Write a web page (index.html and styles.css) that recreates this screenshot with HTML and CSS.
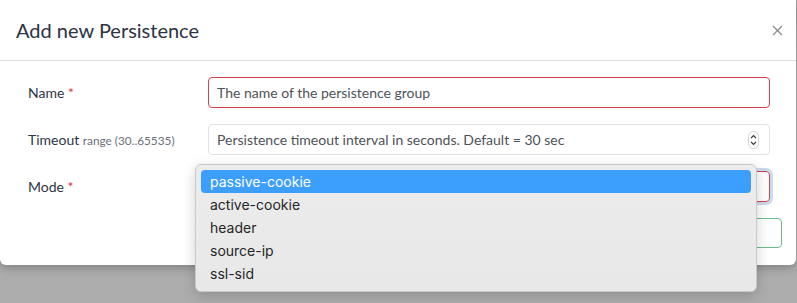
FILE: index.html
```html
<!DOCTYPE html>
<html lang="en">
<head>
  <meta charset="UTF-8">
  <meta name="viewport" content="width=device-width, initial-scale=1.0">
  <title>Add new Persistence</title>
  <link rel="stylesheet" href="styles.css">
</head>
<body>
  <div class="modal">
    <div class="modal-header">
      <h2>Add new Persistence</h2>
      <button class="close-btn" aria-label="Close">
        <svg width="11" height="11" viewBox="0 0 11 11"><path d="M1 1L10 10M10 1L1 10" stroke="#8a8a8a" stroke-width="1.3" fill="none"/></svg>
      </button>
    </div>

    <form class="modal-body">
      <div class="form-row">
        <label>Name <span class="req">*</span></label>
        <input type="text" class="field invalid" placeholder="The name of the persistence group">
      </div>
      <div class="form-row">
        <label>Timeout <small>range (30..65535)</small></label>
        <div class="number-wrap">
          <input type="text" class="field" placeholder="Persistence timeout interval in seconds. Default = 30 sec">
          <span class="spinner">
            <svg width="11" height="18" viewBox="0 0 11 18">
              <rect x="0.5" y="0.5" width="10" height="17" rx="5" fill="#fff" stroke="#d4d4d4"/>
              <path d="M3 7.2L5.5 4.6L8 7.2M3 10.8L5.5 13.4L8 10.8" stroke="#333" stroke-width="1.2" fill="none"/>
            </svg>
          </span>
        </div>
      </div>
      <div class="form-row">
        <label>Mode <span class="req">*</span></label>
        <div class="field select invalid focused"></div>
      </div>
    </form>

    <div class="modal-footer">
      <button type="button" class="save-btn">Save</button>
    </div>

    <ul class="dropdown">
      <li class="active">passive-cookie</li>
      <li>active-cookie</li>
      <li>header</li>
      <li>source-ip</li>
      <li>ssl-sid</li>
    </ul>
  </div>
</body>
</html>
```

FILE: styles.css
```css
* {
  margin: 0;
  padding: 0;
  box-sizing: border-box;
}

body {
  font-family: 'Lato', 'Open Sans', sans-serif;
  background: linear-gradient(#a2a2a2, #adadad 60px);
  height: 100vh;
  overflow: hidden;
}

.modal {
  position: relative;
  background-color: #ffffff;
  border-radius: 0 0 6px 6px;
  margin-right: 1px;
  box-shadow: 0 3px 10px rgba(0, 0, 0, 0.25);
}

.modal-header {
  display: flex;
  align-items: center;
  justify-content: space-between;
  padding: 15px 12px 15px 16px;
  border-bottom: 1px solid #dfe1e4;
}

h2 {
  font-size: 20px;
  font-weight: 400;
  line-height: 30px;
  color: #2b3345;
}

.close-btn {
  background: none;
  border: none;
  width: 11px;
  height: 11px;
  margin-right: 1px;
  display: flex;
}

.modal-body {
  display: flex;
  flex-direction: column;
  gap: 16px;
  padding: 16px 26px 0 28px;
}

.form-row {
  display: flex;
  align-items: center;
}

.form-row label {
  width: 180px;
  flex-shrink: 0;
  font-size: 14px;
  color: #2f3646;
}

.form-row label small {
  font-size: 11.8px;
  color: #6a6f78;
}

.req {
  color: #dc3545;
}

.field {
  flex: 1;
  height: 31px;
  padding: 0 8px;
  font-family: 'Lato', sans-serif;
  font-size: 14px;
  color: #333;
  border: 1px solid #dfe2e6;
  border-radius: 4px;
  outline: none;
}

.field::placeholder {
  color: #4e5258;
}

.field.invalid {
  border-color: #d9404f;
}

.field.focused {
  box-shadow: 0 0 0 3px #c9dbf0;
}

.number-wrap {
  flex: 1;
  position: relative;
  display: flex;
}

.spinner {
  position: absolute;
  right: 11px;
  top: 7px;
  display: flex;
}

.modal-footer {
  display: flex;
  justify-content: flex-end;
  padding: 16px 14px 17px;
}

.save-btn {
  height: 30px;
  width: 80px;
  background: #fff;
  border: 1px solid #6cbf8a;
  border-radius: 4px;
  color: #3a9b5c;
  font-family: 'Lato', sans-serif;
  font-size: 14px;
}

.dropdown {
  position: absolute;
  left: 195px;
  top: 164px;
  width: 562px;
  list-style: none;
  padding: 5px 5px 6px;
  background: linear-gradient(#ececec, #e8e8e8);
  border: 1px solid #c9c9c9;
  border-radius: 6px;
  box-shadow: 0 4px 14px rgba(0, 0, 0, 0.18);
  font-family: 'Inter', 'Liberation Sans', sans-serif;
  font-size: 14px;
  color: #262626;
}

.dropdown li {
  height: 23px;
  line-height: 24px;
  padding-left: 9px;
  border-radius: 4px;
}

.dropdown li.active {
  background-color: #3d9ffd;
  color: #ffffff;
}
```
